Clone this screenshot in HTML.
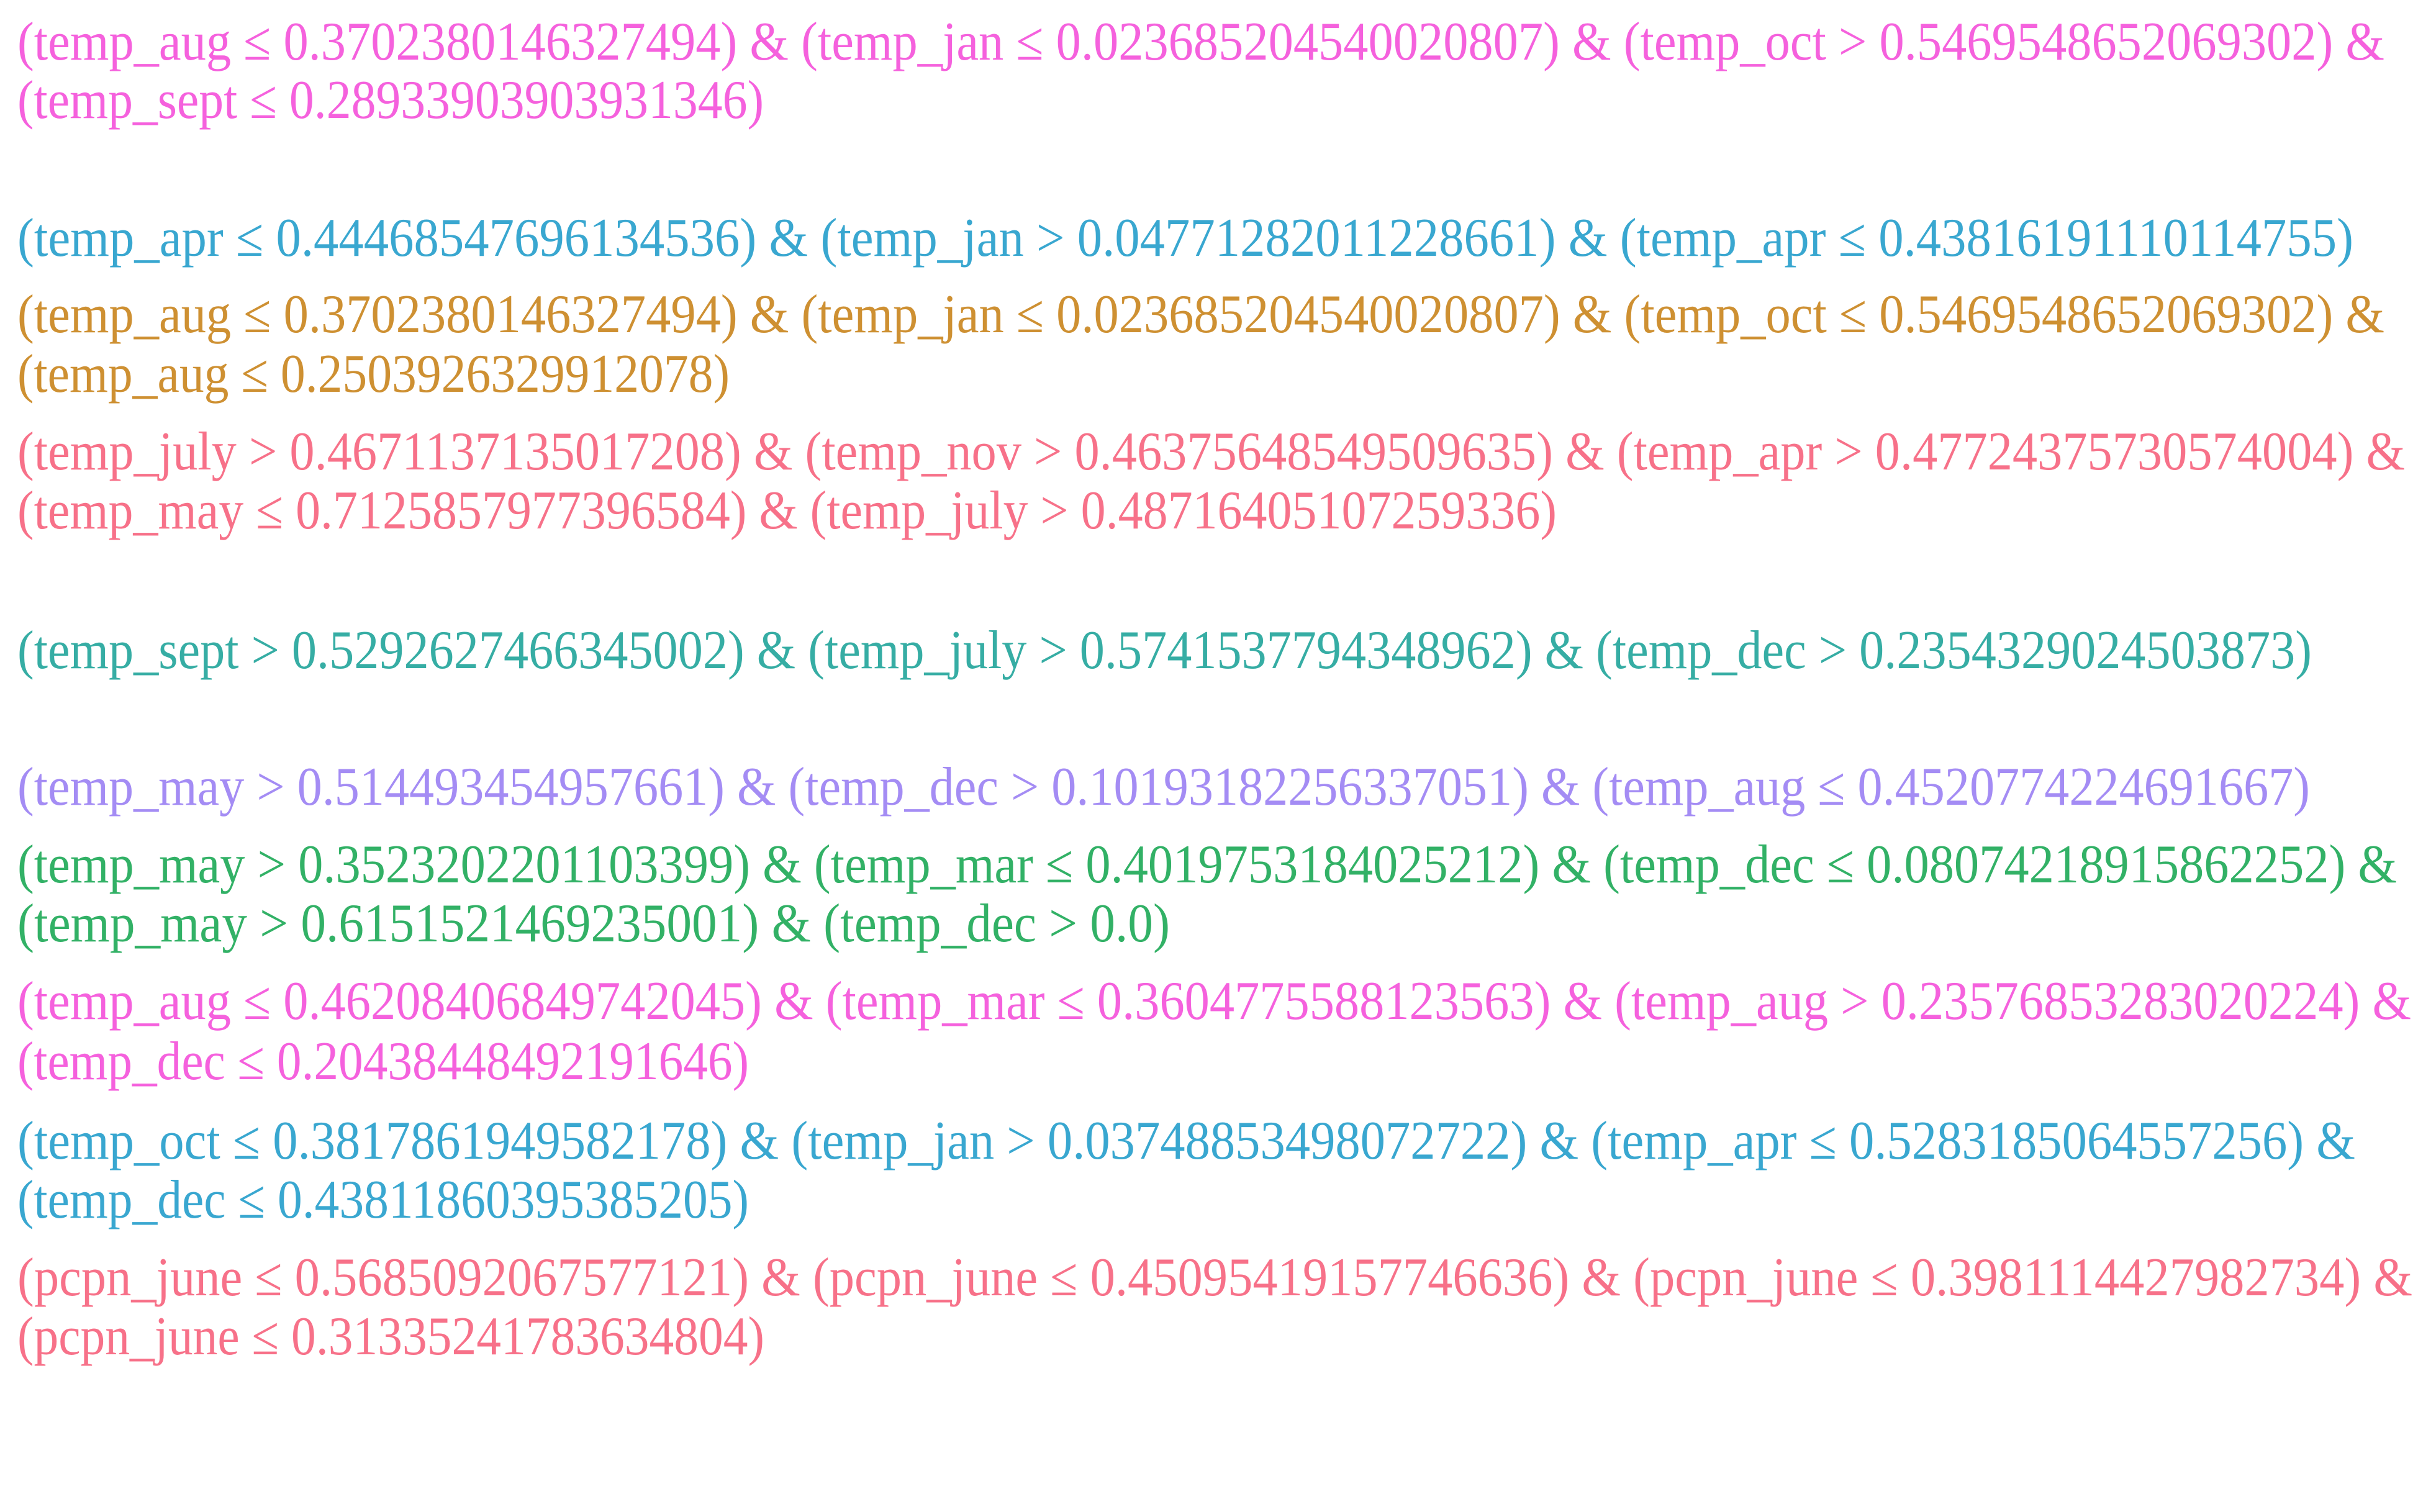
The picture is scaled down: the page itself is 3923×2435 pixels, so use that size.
<!DOCTYPE html>
<html><head><meta charset="utf-8"><style>
html,body{margin:0;padding:0;background:#fff;}
svg{display:block}
text{font-family:"Liberation Serif",serif;font-size:88px;}
</style></head><body>
<svg width="3923" height="2435" viewBox="0 0 3923 2435" xmlns="http://www.w3.org/2000/svg">
<g>
<text x="28" y="96" fill="#f561dd" textLength="3812" lengthAdjust="spacingAndGlyphs">(temp_aug ≤ 0.3702380146327494) &amp; (temp_jan ≤ 0.023685204540020807) &amp; (temp_oct &gt; 0.5469548652069302) &amp;</text>
<text x="28" y="190" fill="#f561dd" textLength="1202" lengthAdjust="spacingAndGlyphs">(temp_sept ≤ 0.28933903903931346)</text>
<text x="28" y="412" fill="#39a7d0" textLength="3762" lengthAdjust="spacingAndGlyphs">(temp_apr ≤ 0.44468547696134536) &amp; (temp_jan &gt; 0.04771282011228661) &amp; (temp_apr ≤ 0.43816191110114755)</text>
<text x="28" y="535" fill="#ce9032" textLength="3812" lengthAdjust="spacingAndGlyphs">(temp_aug ≤ 0.3702380146327494) &amp; (temp_jan ≤ 0.023685204540020807) &amp; (temp_oct ≤ 0.5469548652069302) &amp;</text>
<text x="28" y="631" fill="#ce9032" textLength="1147" lengthAdjust="spacingAndGlyphs">(temp_aug ≤ 0.2503926329912078)</text>
<text x="28" y="756" fill="#f77189" textLength="3845" lengthAdjust="spacingAndGlyphs">(temp_july &gt; 0.4671137135017208) &amp; (temp_nov &gt; 0.46375648549509635) &amp; (temp_apr &gt; 0.47724375730574004) &amp;</text>
<text x="28" y="851" fill="#f77189" textLength="2479" lengthAdjust="spacingAndGlyphs">(temp_may ≤ 0.7125857977396584) &amp; (temp_july &gt; 0.48716405107259336)</text>
<text x="28" y="1076" fill="#36ada4" textLength="3695" lengthAdjust="spacingAndGlyphs">(temp_sept &gt; 0.5292627466345002) &amp; (temp_july &gt; 0.5741537794348962) &amp; (temp_dec &gt; 0.2354329024503873)</text>
<text x="28" y="1296" fill="#a48cf4" textLength="3692" lengthAdjust="spacingAndGlyphs">(temp_may &gt; 0.514493454957661) &amp; (temp_dec &gt; 0.10193182256337051) &amp; (temp_aug ≤ 0.4520774224691667)</text>
<text x="28" y="1421" fill="#32b166" textLength="3832" lengthAdjust="spacingAndGlyphs">(temp_may &gt; 0.3523202201103399) &amp; (temp_mar ≤ 0.4019753184025212) &amp; (temp_dec ≤ 0.08074218915862252) &amp;</text>
<text x="28" y="1516" fill="#32b166" textLength="1856" lengthAdjust="spacingAndGlyphs">(temp_may &gt; 0.6151521469235001) &amp; (temp_dec &gt; 0.0)</text>
<text x="28" y="1641" fill="#f561dd" textLength="3855" lengthAdjust="spacingAndGlyphs">(temp_aug ≤ 0.46208406849742045) &amp; (temp_mar ≤ 0.3604775588123563) &amp; (temp_aug &gt; 0.23576853283020224) &amp;</text>
<text x="28" y="1738" fill="#f561dd" textLength="1178" lengthAdjust="spacingAndGlyphs">(temp_dec ≤ 0.20438448492191646)</text>
<text x="28" y="1866" fill="#39a7d0" textLength="3765" lengthAdjust="spacingAndGlyphs">(temp_oct ≤ 0.3817861949582178) &amp; (temp_jan &gt; 0.03748853498072722) &amp; (temp_apr ≤ 0.5283185064557256) &amp;</text>
<text x="28" y="1961" fill="#39a7d0" textLength="1178" lengthAdjust="spacingAndGlyphs">(temp_dec ≤ 0.43811860395385205)</text>
<text x="28" y="2086" fill="#f77189" textLength="3857" lengthAdjust="spacingAndGlyphs">(pcpn_june ≤ 0.5685092067577121) &amp; (pcpn_june ≤ 0.45095419157746636) &amp; (pcpn_june ≤ 0.3981114427982734) &amp;</text>
<text x="28" y="2181" fill="#f77189" textLength="1203" lengthAdjust="spacingAndGlyphs">(pcpn_june ≤ 0.31335241783634804)</text>
</g>
</svg>
</body></html>
